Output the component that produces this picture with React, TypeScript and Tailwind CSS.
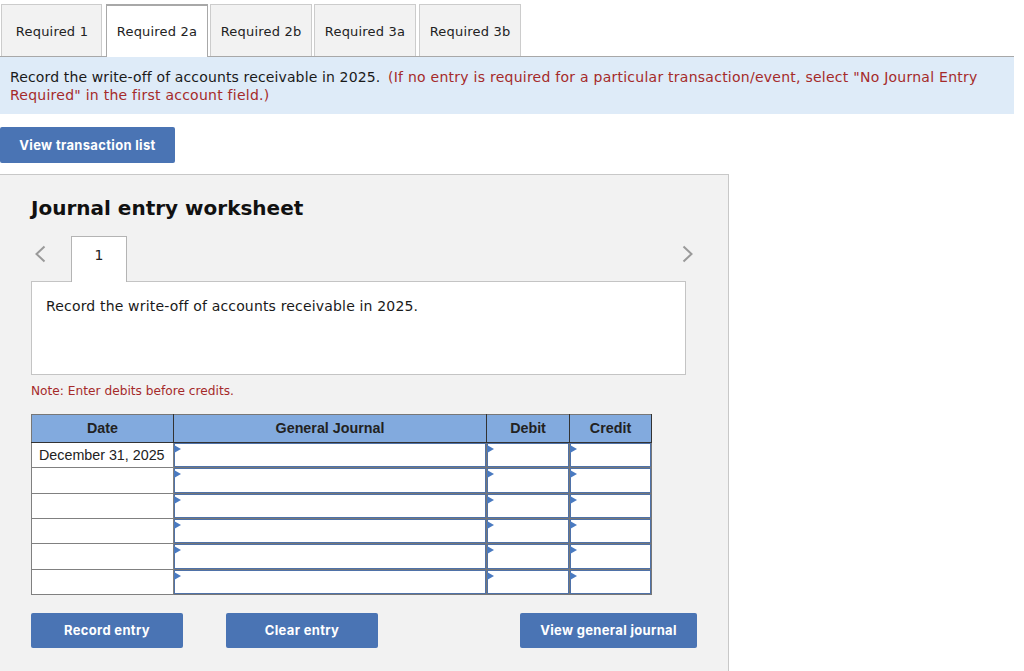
import React from "react";

const tabs = [
  { label: "Required 1", cls: "w-[101px] mr-[2px] pl-[1px]" },
  { label: "Required 2a", cls: "w-[102px]", active: true },
  { label: "Required 2b", cls: "w-[102px]" },
  { label: "Required 3a", cls: "w-[102px] mr-[1px]" },
  { label: "Required 3b", cls: "w-[102px]" },
];
const rows = ["December 31, 2025", "", "", "", "", ""];

function InputCell() {
  return (
    <td className="relative h-[25px] p-0 border border-[#777] bg-white">
      <div className="h-full w-full border-[1.5px] border-[#4f72a8] bg-white"></div>
      <span className="absolute left-0 top-[2px] w-0 h-0 border-y-[4px] border-y-transparent border-l-[7px] border-l-[#4a7ac0]"></span>
    </td>
  );
}

export default function App() {
  return (
    <div className="w-[1024px] h-[671px] overflow-hidden bg-white text-black font-['DejaVu_Sans',sans-serif]">
      {/* Tabs */}
      <div className="flex gap-[2px] h-[57px] pt-[4px] pl-[1px] items-end border-b border-[#a8a8a8] w-[1014px] text-[13px] tracking-[0.2px] text-[#222]">
        {tabs.map((t) => (
          <div
            key={t.label}
            className={
              t.active
                ? `${t.cls} h-[53px] -mb-[1px] flex items-center justify-center bg-white border border-b-0 border-t-2 border-[#a8a8a8]`
                : `${t.cls} h-[52px] pt-[2px] flex items-center justify-center bg-[#f2f2f2] border border-b-0 border-[#cccccc]`
            }
          >
            {t.label}
          </div>
        ))}
      </div>

      {/* Instruction banner */}
      <div className="w-[1014px] h-[57px] bg-[#deebf8] pl-[10px] pr-[20px] pt-[12px] text-[14px] leading-[17.5px] tracking-[0.135px] text-[#1a1a1a]">
        Record the write-off of accounts receivable in 2025.{" "}
        <span className="ml-[3px] tracking-[0.25px] text-[#a52a2a]">
          (If no entry is required for a particular transaction/event, select "No Journal Entry Required" in the first account field.)
        </span>
      </div>

      <button className="block mt-[13px] w-[175px] h-[36px] pt-[1px] bg-[#4a74b4] rounded-[2px] text-white font-bold text-[13px] tracking-[0.33px] font-['Inter',sans-serif]">
        View transaction list
      </button>

      {/* Worksheet panel */}
      <div className="mt-[11px] w-[729px] h-[520px] bg-[#f2f2f2] border-t border-r border-[#c8c8c8] pl-[31px] pr-[31px]">
        <h2 className="pt-[21px] h-[61px] text-[20px] leading-[24px] font-bold text-[#111]">Journal entry worksheet</h2>

        <div className="relative flex h-[45px] pl-[40px]">
          <svg className="absolute left-[3px] top-[9px]" width="12" height="18" viewBox="0 0 12 18" fill="none">
            <path d="M10.5 1.5 L2.5 9 L10.5 16.5" stroke="#9a9a9a" strokeWidth="2" />
          </svg>
          <div className="w-[56px] h-[46px] z-10 bg-white border border-b-0 border-[#b4b4b4] flex items-start justify-center pt-[10px] text-[14px] leading-[17px] text-[#222]">
            1
          </div>
          <svg className="absolute right-[3px] top-[9px]" width="12" height="18" viewBox="0 0 12 18" fill="none">
            <path d="M1.5 1.5 L9.5 9 L1.5 16.5" stroke="#9a9a9a" strokeWidth="2" />
          </svg>
        </div>

        <div className="w-[655px] h-[94px] bg-white border border-[#c4c4c4] pl-[14px] pt-[15px] text-[14px] leading-[18px] tracking-[0.17px] text-[#1a1a1a]">
          Record the write-off of accounts receivable in 2025.
        </div>

        <p className="mt-[8px] h-[31px] text-[12.2px] leading-[16px] text-[#a52a2a]">Note: Enter debits before credits.</p>

        {/* Journal table */}
        <table className="w-[620px] h-[181px] table-fixed border-collapse bg-white font-['Liberation_Sans',sans-serif] text-[14.3px] text-[#222]">
          <colgroup>
            <col className="w-[142px]" />
            <col className="w-[313px]" />
            <col className="w-[83px]" />
            <col className="w-[82px]" />
          </colgroup>
          <thead>
            <tr className="h-[28px] bg-[#82aade]">
              <th className="border border-[#333] border-l-[#777] border-t-[#777] font-bold">Date</th>
              <th className="border border-[#333] border-t-[#777] font-bold">General Journal</th>
              <th className="border border-[#333] border-t-[#777] font-bold">Debit</th>
              <th className="border border-[#333] border-t-[#777] font-bold">Credit</th>
            </tr>
          </thead>
          <tbody>
            {rows.map((date, i) => (
              <tr key={i} className="h-[25px]">
                <td className="border border-[#808080] pl-[7px] pt-[1px] pb-0 pr-0 whitespace-nowrap">{date}</td>
                <InputCell />
                <InputCell />
                <InputCell />
              </tr>
            ))}
          </tbody>
        </table>

        {/* Actions */}
        <div className="flex mt-[18px] font-['Inter',sans-serif] text-white text-[13px] tracking-[0.33px] font-bold">
          <button className="w-[152px] h-[35px] pt-[1px] bg-[#4a74b4] rounded-[2px]">Record entry</button>
          <button className="ml-[43px] w-[152px] h-[35px] pt-[1px] bg-[#4a74b4] rounded-[2px]">Clear entry</button>
          <button className="ml-[142px] w-[177px] h-[35px] pt-[1px] bg-[#4a74b4] rounded-[2px]">View general journal</button>
        </div>
      </div>
    </div>
  );
}
